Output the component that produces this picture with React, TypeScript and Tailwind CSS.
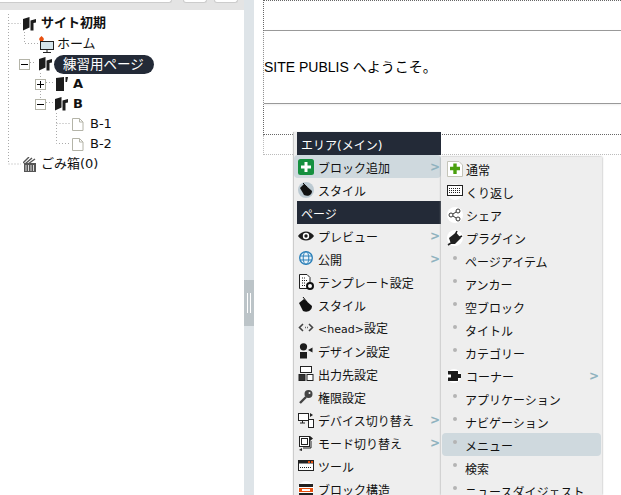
import type { ReactNode } from 'react'

const FONT = '"DejaVu Sans", "Noto Sans CJK JP", sans-serif'

const FolderIcon = () => (
  <svg width="13" height="14" viewBox="0 0 13 14" className="shrink-0">
    <path d="M0 2 L6.5 0 V10.5 L0 13.5Z" fill="#1c1c1c" />
    <path d="M7.5 3.5 L13 2 V5.5 L10.5 6 V13.5 H7.5Z" fill="#1c1c1c" />
  </svg>
)

const ClosedFolderIcon = () => (
  <svg width="12" height="14" viewBox="0 0 12 14" className="shrink-0">
    <path d="M0 1 L8 0 V14 H0Z" fill="#1c1c1c" />
    <path d="M9.5 0 H12 L11 5 H9.5Z" fill="#1c1c1c" />
  </svg>
)

const PageIcon = () => (
  <svg width="12" height="13" viewBox="0 0 12 13" className="shrink-0">
    <path d="M.5 .5 H7.5 L11 4 V12.5 H.5Z M7.5 .5 V4 H11" fill="#fff" stroke="#b4b4a8" />
  </svg>
)

const HomeIcon = () => (
  <svg width="15" height="17" viewBox="0 0 15 17" className="shrink-0">
    <rect x="1.5" y="5.5" width="13" height="8" fill="#d5e5ec" stroke="#222" />
    <path d="M8 14 V16 M4 16.5 H12" stroke="#222" />
    <path d="M2.5 0 L4 1.5 L5 3 L4 5 H1 L0 3 L1 1.5Z" fill="#e8500f" />
  </svg>
)

const TrashIcon = () => (
  <svg width="13" height="15" viewBox="0 0 13 15" className="shrink-0">
    <path d="M1 6 H13 V15 H1Z" fill="#555" />
    <path d="M3 8 V14 M5.5 8 V14 M8 8 V14 M10.5 8 V14" stroke="#ddd" />
    <path d="M0 6 L6 0 M2 7 L9 1 M5 7 L12 2" stroke="#555" strokeWidth="1.4" />
  </svg>
)

const Toggle = ({ open }: { open: boolean }) => (
  <span className="w-[11px] h-[11px] border border-[#b4b4a8] bg-white flex items-center justify-center shrink-0 relative">
    <span className="absolute w-[7px] h-px bg-black" />
    {!open && <span className="absolute h-[7px] w-px bg-black" />}
  </span>
)

const TreeRow = ({ indent, children }: { indent: string; children: ReactNode }) => (
  <div className={`h-5 flex items-center ${indent}`}>{children}</div>
)

const Bullet = () => (
  <span className="w-[15px] h-4 flex justify-center shrink-0">
    <span className="w-1 h-1 mt-[3px] rounded-full bg-[#b4b4b4]" />
  </span>
)

const Disc = ({ children }: { children: ReactNode }) => (
  <svg width="16" height="16" viewBox="0 0 16 16" className="shrink-0">
    {children}
  </svg>
)

const mainIcons: Record<string, ReactNode> = {
  add: (
    <Disc>
      <rect x="0" y="0" width="16" height="16" rx="2.5" fill="#15903f" />
      <path d="M8 3 V13 M3 8 H13" stroke="#fff" strokeWidth="3" />
    </Disc>
  ),
  style: (
    <Disc>
      <circle cx="8" cy="8" r="8" fill="#bccad2" />
      <path d="M2 6 L6 2 L14 9 C14 13 10 15 6 13Z" fill="#111" />
      <path d="M5 1 L9 5" stroke="#111" />
    </Disc>
  ),
  style2: (
    <Disc>
      <path d="M1 6 L6 2 L14 9 C14 13 10 16 5 14Z" fill="#111" />
      <path d="M5 0 L9 5" stroke="#111" />
    </Disc>
  ),
  eye: (
    <Disc>
      <path d="M0 8 C4 2 12 2 16 8 C12 14 4 14 0 8Z" fill="#1c1c1c" />
      <circle cx="8" cy="8" r="3.2" fill="#fff" />
      <circle cx="8" cy="8" r="1.7" fill="#1c1c1c" />
    </Disc>
  ),
  globe: (
    <Disc>
      <circle cx="8" cy="7" r="6.3" fill="#eaf3f9" stroke="#2a7fb8" strokeWidth="1.3" />
      <ellipse cx="8" cy="7" rx="2.8" ry="6.3" fill="none" stroke="#2a7fb8" />
      <path d="M2 5 H14 M2 9 H14" stroke="#2a7fb8" />
    </Disc>
  ),
  template: (
    <Disc>
      <path d="M1.5 .5 H9 L12 3.5 V14.5 H1.5Z" fill="#fff" stroke="#222" />
      <path d="M4 4 H8 M4 6.5 H9 M4 9 H7 M4 11.5 H7" stroke="#222" strokeDasharray="1 1" />
      <circle cx="12" cy="12" r="3" fill="#fff" stroke="#111" strokeWidth="2" />
    </Disc>
  ),
  head: (
    <Disc>
      <path d="M5 4 L1.5 7.5 L5 11 M11 4 L14.5 7.5 L11 11" fill="none" stroke="#444" strokeWidth="1.6" />
      <path d="M7 7.5 H7.8 M9 7.5 H9.8" stroke="#444" strokeWidth="1.4" />
    </Disc>
  ),
  design: (
    <Disc>
      <circle cx="5.5" cy="3.8" r="3.6" fill="#1c1c1c" />
      <rect x="2" y="9" width="7" height="6.5" fill="#1c1c1c" />
      <path d="M10 7 L14.5 4.5 V9.5Z" fill="#1c1c1c" />
    </Disc>
  ),
  output: (
    <Disc>
      <rect x="2.5" y=".5" width="11" height="6" fill="#fff" stroke="#222" />
      <rect x="1" y="8.5" width="6" height="6" fill="#333" stroke="#222" />
      <rect x="9" y="8.5" width="6" height="6" fill="#fff" stroke="#222" />
    </Disc>
  ),
  key: (
    <Disc>
      <circle cx="10.5" cy="5" r="4" fill="#444" />
      <path d="M8 8 L2 14" stroke="#444" strokeWidth="2.4" />
      <circle cx="11.5" cy="4" r="1" fill="#eee" />
    </Disc>
  ),
  device: (
    <Disc>
      <rect x=".5" y="1.5" width="10" height="7" fill="#fff" stroke="#222" />
      <path d="M2 11 H7 M4.5 9 V11" stroke="#222" />
      <rect x="10.5" y="7.5" width="5" height="8" fill="#fff" stroke="#222" />
      <path d="M12 1 L15 3 L12 5Z" fill="#222" />
    </Disc>
  ),
  mode: (
    <Disc>
      <rect x="1.5" y="1.5" width="10" height="10" fill="#fff" stroke="#222" />
      <rect x="3.5" y="3.5" width="6" height="6" fill="#fff" stroke="#222" />
      <path d="M12 1 L15 3.5 L12 6Z M4 13 L1 15 L4 16Z" fill="#222" />
      <path d="M13 6 V13 H5" fill="none" stroke="#222" />
    </Disc>
  ),
  tool: (
    <Disc>
      <rect x=".5" y="2.5" width="15" height="10" fill="#fff" stroke="#222" />
      <rect x="1" y="3" width="14" height="2.5" fill="#222" />
      <rect x="10" y="3" width="2" height="2" fill="#e8500f" />
      <rect x="13" y="3" width="2" height="2" fill="#e8500f" />
      <path d="M2 9.5 H14" stroke="#222" strokeDasharray="1 1" />
    </Disc>
  ),
  block: (
    <Disc>
      <circle cx="8" cy="8" r="8" fill="#fff" />
      <rect x="1" y="3" width="14" height="3" fill="#222" />
      <rect x="1" y="7" width="14" height="4" fill="#e8500f" />
      <rect x="4" y="8" width="8" height="2" fill="#fff" />
      <rect x="1" y="12" width="14" height="3" fill="#222" />
    </Disc>
  ),
  plain: (
    <Disc>
      <path d="M.5 .5 H12 L15.5 4 V15.5 H.5Z" fill="#fff" stroke="#c4c4b8" />
      <path d="M8 2.5 V13 M3 7.5 H13" stroke="#4ba00e" strokeWidth="3.4" />
    </Disc>
  ),
  repeat: (
    <Disc>
      <circle cx="8" cy="8" r="8" fill="#fff" />
      <rect x=".5" y="1.5" width="15" height="10" fill="#fff" stroke="#222" />
      <path d="M2 4.5 H14 M2 6.5 H14 M2 8.5 H14" stroke="#222" strokeDasharray="1 1" />
    </Disc>
  ),
  share: (
    <Disc>
      <circle cx="8" cy="8" r="8" fill="#fff" />
      <circle cx="4" cy="8" r="2" fill="none" stroke="#333" />
      <circle cx="11" cy="4" r="2" fill="none" stroke="#333" />
      <circle cx="11" cy="12" r="2" fill="none" stroke="#333" />
      <path d="M6 7 L9 5 M6 9 L9 11" stroke="#333" />
    </Disc>
  ),
  plugin: (
    <Disc>
      <circle cx="8" cy="8" r="8" fill="#fff" />
      <path d="M2 8 L9 2.5 L14 8 L8 14 H4Z" fill="#222" />
      <path d="M10 1 L8 5 M15 6 L11 8 M4 13 L1 15" stroke="#222" strokeWidth="1.6" />
    </Disc>
  ),
  corner: (
    <Disc>
      <ellipse cx="7" cy="8" rx="7" ry="7" fill="#fff" />
      <path d="M1 3 H11 V6 H14 V10 H11 V13 H1 V9.5 H4 V6.5 H1Z" fill="#1c1c1c" />
    </Disc>
  ),
}

type Item = { label: ReactNode; icon?: string; arrow?: boolean; active?: boolean; header?: boolean }

const mainMenu: Item[] = [
  { label: 'エリア(メイン)', header: true },
  { label: 'ブロック追加', icon: 'add', arrow: true, active: true },
  { label: 'スタイル', icon: 'style' },
  { label: 'ページ', header: true },
  { label: 'プレビュー', icon: 'eye', arrow: true },
  { label: '公開', icon: 'globe', arrow: true },
  { label: 'テンプレート設定', icon: 'template' },
  { label: 'スタイル', icon: 'style2' },
  {
    label: (
      <>
        <span className="text-[11px]">&lt;head&gt;</span>設定
      </>
    ),
    icon: 'head',
  },
  { label: 'デザイン設定', icon: 'design' },
  { label: '出力先設定', icon: 'output' },
  { label: '権限設定', icon: 'key' },
  { label: 'デバイス切り替え', icon: 'device', arrow: true },
  { label: 'モード切り替え', icon: 'mode', arrow: true },
  { label: 'ツール', icon: 'tool' },
  { label: 'ブロック構造', icon: 'block' },
]

const subMenu: Item[] = [
  { label: '通常', icon: 'plain' },
  { label: 'くり返し', icon: 'repeat' },
  { label: 'シェア', icon: 'share' },
  { label: 'プラグイン', icon: 'plugin' },
  { label: 'ページアイテム' },
  { label: 'アンカー' },
  { label: '空ブロック' },
  { label: 'タイトル' },
  { label: 'カテゴリー' },
  { label: 'コーナー', icon: 'corner', arrow: true },
  { label: 'アプリケーション' },
  { label: 'ナビゲーション' },
  { label: 'メニュー', active: true },
  { label: '検索' },
  { label: 'ニュースダイジェスト' },
]

const MenuRow = ({ item, sub }: { item: Item; sub?: boolean }) => {
  if (item.header) {
    return (
      <div className="h-[23px] ml-[3px] pl-1 pt-1 flex items-center bg-[#232a37] text-white text-[12px] shrink-0">
        {item.label}
      </div>
    )
  }
  return (
    <div
      className={`h-[23px] shrink-0 flex items-center text-[12px] text-[#111] rounded-sm ${
        sub ? 'pl-[5px] pr-[3px] gap-[3px]' : 'pl-1 pr-0.5 gap-1'
      } ${item.active ? 'bg-[#cfd9de]' : ''}`}
    >
      {item.icon ? mainIcons[item.icon] : <Bullet />}
      <span className="flex-1 whitespace-nowrap pt-1">{item.label}</span>
      {item.arrow && <span className="text-[#8fb2bf] text-[12px] font-bold -mr-px">&gt;</span>}
    </div>
  )
}

export default function App() {
  return (
    <div className="w-[621px] h-[495px] flex overflow-hidden bg-white relative" style={{ fontFamily: FONT }}>
      {/* サイトツリー */}
      <div className="w-[244px] h-full flex flex-col shrink-0">
        <div className="h-[10px] bg-[#e4e4e4] flex gap-[11px] items-start shrink-0">
          <div className="w-[172px] h-[3px] bg-white border-b border-r border-[#ccc] rounded-br" />
          <div className="w-[24px] h-[3px] bg-white border-x border-b border-[#ccc] rounded-b" />
          <div className="w-[24px] h-[3px] bg-white border-x border-b border-[#ccc] rounded-b -ml-1" />
        </div>
        <div className="relative pt-[3px] text-[13px] text-[#111]">
          {/* ツリーの点線 */}
          <svg className="absolute left-0 top-0" width="120" height="160" fill="none" stroke="#aaa" strokeDasharray="1 2">
            <path d="M8.5 4 V154 H21" />
            <path d="M8.5 13.5 H21" />
            <path d="M24.5 22 V33.5 H38" />
            <path d="M30 52.5 H36" />
            <path d="M40.5 63 V88" />
            <path d="M46 72.5 H53 M46 92.5 H53" />
            <path d="M56.5 103 V133.5 H71 M56.5 113.5 H71" />
          </svg>
          <div className="h-[21px] flex items-center pl-[23px] gap-[5px] font-bold">
            <FolderIcon />
            <span className="pb-0.5">サイト初期</span>
          </div>
          <TreeRow indent="pl-[39px] gap-[3px]">
            <HomeIcon />
            <span>ホーム</span>
          </TreeRow>
          <TreeRow indent="pl-[19px]">
            <Toggle open />
            <span className="ml-[9px]">
              <FolderIcon />
            </span>
            <span className="ml-0.5 h-[19px] pl-[9px] w-[100px] rounded-full bg-[#232a37] text-white flex items-center text-[13.5px] whitespace-nowrap">
              練習用ページ
            </span>
          </TreeRow>
          <TreeRow indent="pl-[35px] font-bold">
            <Toggle open={false} />
            <span className="ml-2.5">
              <ClosedFolderIcon />
            </span>
            <span className="ml-[5px]">A</span>
          </TreeRow>
          <TreeRow indent="pl-[35px] font-bold">
            <Toggle open />
            <span className="ml-[9px]">
              <FolderIcon />
            </span>
            <span className="ml-[5px]">B</span>
          </TreeRow>
          <TreeRow indent="pl-[72px] gap-1.5">
            <PageIcon />
            <span>B-1</span>
          </TreeRow>
          <TreeRow indent="pl-[72px] gap-1.5">
            <PageIcon />
            <span>B-2</span>
          </TreeRow>
          <TreeRow indent="pl-[23px] gap-[5px]">
            <TrashIcon />
            <span>ごみ箱(0)</span>
          </TreeRow>
        </div>
      </div>

      {/* スプリッター */}
      <div className="w-[10px] h-full shrink-0 bg-[#dee4e8] flex flex-col pt-[280px]">
        <div className="h-[46px] bg-[#bcc4c8] flex items-center justify-center gap-0.5">
          <span className="w-px h-5 bg-white" />
          <span className="w-px h-5 bg-white" />
        </div>
      </div>

      {/* プレビュー */}
      <div className="flex-1 pl-[9px]">
        <div className="h-[135px] border-l border-b border-t border-dotted border-[#666] flex flex-col">
          <div className="h-[29px] shrink-0" />
          <div
            className="h-[74px] shrink-0 border-y border-[#999] flex items-center text-[14px] text-black shadow-[0_1px_2px_#eee]"
            style={{ fontFamily: '"Liberation Sans", "Noto Sans CJK JP", sans-serif' }}
          >
            SITE PUBLIS へようこそ。
          </div>
        </div>
        <div className="h-5 border-l border-b border-dotted border-[#bbb]" />
      </div>

      {/* コンテキストメニュー */}
      <div className="absolute left-[294px] top-[132px] w-[147px] h-[363px] bg-[#eee] flex flex-col overflow-hidden shadow-[-1px_0_1px_#ccc]">
        {mainMenu.map((item, i) => (
          <MenuRow key={i} item={item} />
        ))}
      </div>
      <div className="absolute left-[441px] top-[157px] w-[161px] h-[338px] px-px bg-[#eee] flex flex-col overflow-hidden shadow-[0_0_2px_#999]">
        {subMenu.map((item, i) => (
          <MenuRow key={i} item={item} sub />
        ))}
      </div>
    </div>
  )
}
